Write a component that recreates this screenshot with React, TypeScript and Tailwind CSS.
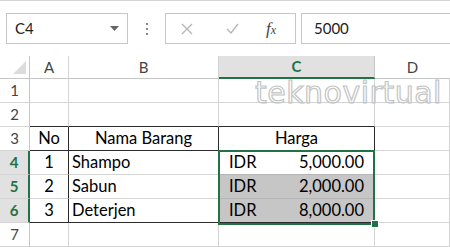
import React from 'react';

const rowH = 'h-[24px]';
const rL = 'border-r-[#d4d4d4]';
const rD = 'border-r-[#2b2b2b]';
const bL = 'border-b-[#d4d4d4]';
const bD = 'border-b-[#2b2b2b]';

type CellProps = {
  r?: string;
  b?: string;
  className?: string;
  children?: React.ReactNode;
};

const Cell: React.FC<CellProps> = ({ r = rL, b = bL, className = '', children }) => (
  <div className={`${rowH} border-r border-b ${r} ${b} flex items-center text-[16.5px] text-black overflow-hidden whitespace-nowrap ${className}`}>
    {children}
  </div>
);

const RowHead: React.FC<{ n: number; sel?: boolean }> = ({ n, sel }) =>
  sel ? (
    <div className={`${rowH} border-r-2 border-b border-r-[#217346] border-b-[#d4d4d4] bg-[#e1e1e1] flex items-center justify-center text-[15px] font-bold text-[#217346]`}>
      {n}
    </div>
  ) : (
    <div className={`${rowH} border-r border-b border-r-[#c6c6c6] border-b-[#d4d4d4] flex items-center justify-center text-[15px] text-[#444]`}>
      {n}
    </div>
  );

const rows = [
  { no: '1', name: 'Shampo', price: '5,000.00' },
  { no: '2', name: 'Sabun', price: '2,000.00' },
  { no: '3', name: 'Deterjen', price: '8,000.00' },
];

export default function App() {
  return (
    <div className="w-[450px] h-[247px] bg-white overflow-hidden font-['Lato',sans-serif] select-none">
      {/* formula bar */}
      <div className="h-[56px] border-t border-[#d4d4d4] flex items-start pt-[12px]">
        <div className="ml-[6px] w-[122px] h-[31px] border border-[#c6c6c6] flex items-center justify-between pl-[8px] pr-[8px]">
          <span className="text-[15px] text-[#222]">C4</span>
          <svg width="9" height="5" viewBox="0 0 9 5">
            <path d="M0 0h9L4.5 5z" fill="#666" />
          </svg>
        </div>
        <div className="w-[37px] h-[31px] flex flex-col items-center justify-center gap-[3px]">
          <span className="w-[2px] h-[2px] bg-[#888]" />
          <span className="w-[2px] h-[2px] bg-[#888]" />
          <span className="w-[2px] h-[2px] bg-[#888]" />
        </div>
        <div className="w-[131px] h-[31px] border border-[#c6c6c6] flex items-center">
          <svg className="ml-[15px]" width="12" height="12" viewBox="0 0 12 12">
            <path d="M1 1l10 10M11 1L1 11" stroke="#b5b5b5" strokeWidth="1.3" />
          </svg>
          <svg className="ml-[33px]" width="13" height="11" viewBox="0 0 13 11">
            <path d="M1 6l4 4 7-9" stroke="#b5b5b5" strokeWidth="1.3" fill="none" />
          </svg>
          <span className="ml-[27px] text-[17px] italic text-[#444] font-['Liberation_Serif',serif] leading-none">
            f<span className="text-[12px]">x</span>
          </span>
        </div>
        <div className="ml-[5px] flex-1 h-[31px] border-l border-t border-b border-[#c6c6c6] flex items-center pl-[12px]">
          <span className="text-[15px] text-[#222]">5000</span>
        </div>
      </div>

      {/* sheet */}
      <div className="relative grid grid-cols-[30px_39px_150px_156px_75px]">
        {/* column headers */}
        <div className="h-[23px] border-r border-b border-r-[#c6c6c6] border-b-[#c6c6c6] flex items-end justify-end pr-[3px] pb-[4px]">
          <svg width="13" height="13" viewBox="0 0 13 13">
            <path d="M13 0V13H0z" fill="#dcdcdc" />
          </svg>
        </div>
        <div className="h-[23px] border-r border-b border-r-[#d4d4d4] border-b-[#c6c6c6] flex items-center justify-center text-[15px] text-[#444]">A</div>
        <div className="h-[23px] border-r border-b border-r-[#d4d4d4] border-b-[#c6c6c6] flex items-center justify-center text-[15px] text-[#444]">B</div>
        <div className="h-[23px] border-r border-b-2 border-r-[#c6c6c6] border-b-[#217346] bg-[#e1e1e1] flex items-center justify-center text-[15px] font-bold text-[#217346]">C</div>
        <div className="h-[23px] border-b border-b-[#c6c6c6] flex items-center justify-center text-[15px] text-[#444]">D</div>

        {/* row 1 */}
        <RowHead n={1} />
        <Cell />
        <Cell />
        <Cell />
        <Cell />

        {/* row 2 */}
        <RowHead n={2} />
        <Cell b={bD} />
        <Cell b={bD} />
        <Cell b={bD} />
        <Cell />

        {/* row 3 */}
        <RowHead n={3} />
        <Cell r={rD} b={bD} className="justify-center">No</Cell>
        <Cell r={rD} b={bD} className="justify-center">Nama Barang</Cell>
        <Cell r={rD} b={bD} className="justify-center">Harga</Cell>
        <Cell />

        {/* rows 4-6 */}
        {rows.map((row, i) => {
          const last = i === rows.length - 1;
          return (
            <React.Fragment key={row.no}>
              <RowHead n={4 + i} sel />
              <Cell r={rD} b={last ? bD : bL} className="justify-center">{row.no}</Cell>
              <Cell r={rD} b={last ? bD : bL} className="pl-[3px]">{row.name}</Cell>
              <Cell r={rD} b={last ? bD : 'border-b-[#b4b4b4]'} className={`justify-between pl-[10px] pr-[10px] ${i > 0 ? 'bg-[#c6c6c6]' : ''}`}>
                <span>IDR</span>
                <span>{row.price}</span>
              </Cell>
              <Cell />
            </React.Fragment>
          );
        })}

        {/* row 7 */}
        <RowHead n={7} />
        <Cell />
        <Cell />
        <Cell />
        <Cell />

        {/* watermark */}
        <div className="absolute left-[255px] top-[22px] text-[30px] leading-none font-['DejaVu_Sans',sans-serif] tracking-[0.5px] text-transparent [-webkit-text-stroke:1.2px_#c4c4c4] pointer-events-none">
          teknovirtual
        </div>

        {/* selection C4:C6 */}
        <div className="absolute left-[218px] top-[94px] w-[157px] h-[75px] border-2 border-[#217346] pointer-events-none" />
        <div className="absolute left-[371px] top-[164px] w-[8px] h-[8px] bg-[#217346] border border-white pointer-events-none" />
      </div>
    </div>
  );
}
